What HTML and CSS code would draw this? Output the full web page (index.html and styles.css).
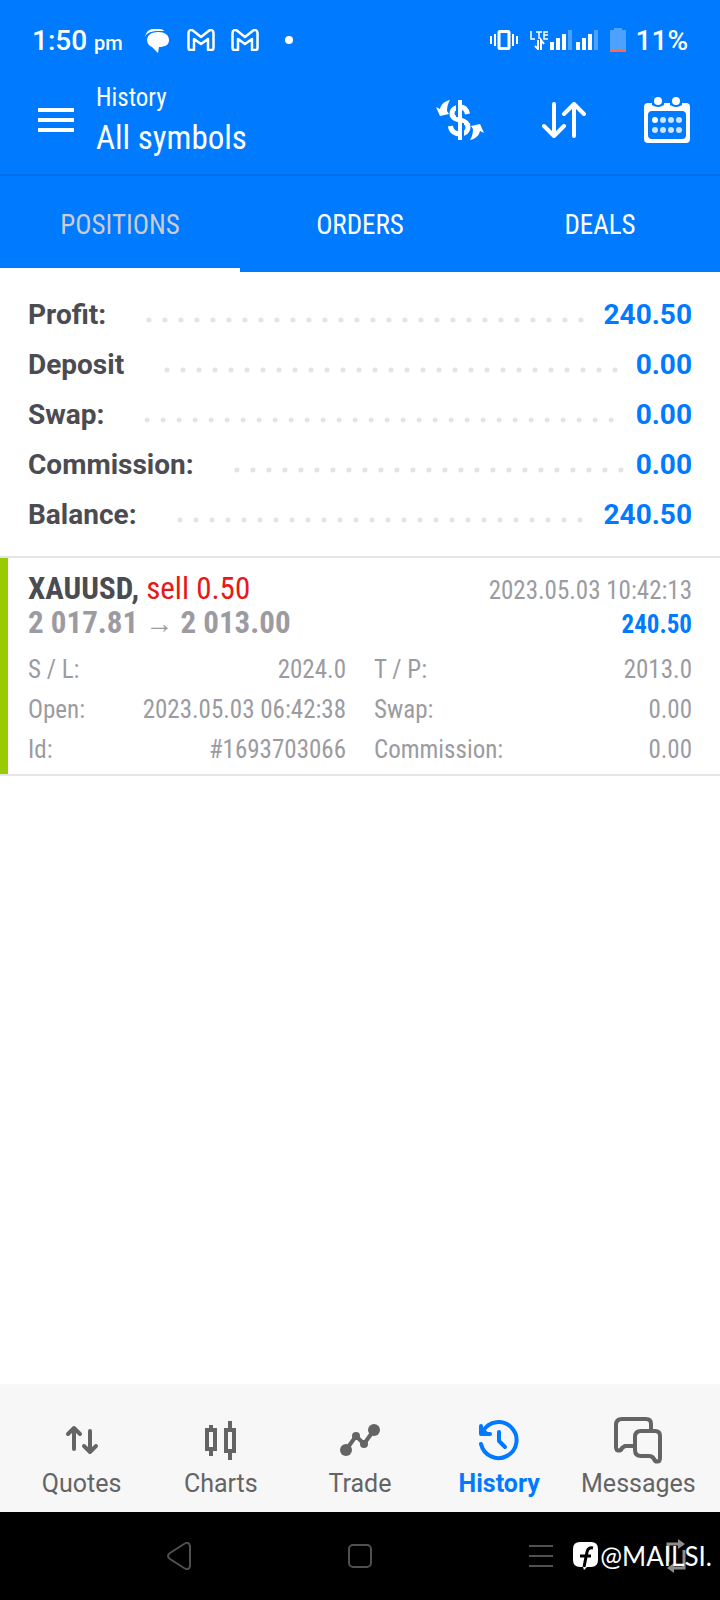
FILE: index.html
```
<!DOCTYPE html>
<html lang="en">
<head>
<meta charset="utf-8">
<meta name="viewport" content="width=device-width, initial-scale=1">
<title>History</title>
<link rel="stylesheet" href="styles.css">
</head>
<body>
<div class="screen">
  <header class="top">
    <div class="status">
      <div class="status-side">
        <span class="clock">1:50 <small class="meridiem">pm</small></span>
        <svg class="s-chat" width="24" height="24" viewBox="0 0 24 24" aria-hidden="true"><path d="M0 8C1 3 4 0 8 0h6c3 0 5 1 6 3H8C4 3 1 5 0 8z" fill="#fff"/><path d="M13 3c7 0 11 3 11 8s-4 7-10 7l-1 6-6-6c-3-1-5-4-5-7 0-5 4-8 11-8z" fill="#fff"/><path d="M1.500 10C3 4 7 2.500 12 2.500h8" fill="none" stroke="#007aff"/></svg>
        <svg class="s-mail" width="28" height="22" viewBox="0 0 28 22" fill="none" stroke="#fff" stroke-width="2.500" stroke-linejoin="round" aria-hidden="true"><path d="M1.500 4c0-3 3-4 5-2l7.500 6 7.500-6c2-2 5-1 5 2v15q0 2-2 2h-3.500V10l-7 5-7-5v11H3.500q-2 0-2-2z"/></svg>
        <svg class="s-mail" width="28" height="22" viewBox="0 0 28 22" fill="none" stroke="#fff" stroke-width="2.500" stroke-linejoin="round" aria-hidden="true"><path d="M1.500 4c0-3 3-4 5-2l7.500 6 7.500-6c2-2 5-1 5 2v15q0 2-2 2h-3.500V10l-7 5-7-5v11H3.500q-2 0-2-2z"/></svg>
        <span class="more-dot"></span>
      </div>
      <div class="status-side">
        <svg width="28" height="20" viewBox="0 0 28 20" fill="none" stroke="#fff" aria-hidden="true"><rect x="9" y="1.500" width="10" height="17" rx="1" stroke-width="3"/><path d="M5 4v12M23 4v12M1 6v8M27 6v8" stroke-width="2"/></svg>
        <svg class="s-signal" width="68" height="20" viewBox="0 0 68 20" aria-hidden="true"><path d="M1 1v8h4M6 2h6M9 2v7M18 2h-4v7h4M14 5h4" fill="none" stroke="#fff" stroke-width="1.500"/><path d="M8 10v9l-3-3M11 20V10l3 4" fill="none" stroke="#fff" stroke-width="2"/><path d="M20 12h4v8h-4zM26 8h4v12h-4zM32 4h4v16h-4zM46 12h4v8h-4zM52 8h4v12h-4zM58 4h4v16h-4z" fill="#fff"/><path d="M38 0h4v20h-4zM64 0h4v20h-4z" fill="#4da2ff"/></svg>
        <svg class="s-battery" width="16" height="24" viewBox="0 0 16 24" aria-hidden="true"><path d="M0 2h4V0h8v2h4v20H0z" fill="#4da2ff"/><path d="M0 22h16v2H0z" fill="#ff6b3d"/></svg>
        <span class="percent">11%</span>
      </div>
    </div>
    <div class="appbar">
      <button class="icon-btn" aria-label="Menu"><svg width="36" height="24" viewBox="0 0 36 24" aria-hidden="true"><path d="M0 0h36v4H0zM0 10h36v4H0zM0 20h36v4H0z" fill="#fff"/></svg></button>
      <div class="titles">
        <h1 class="title">History</h1>
        <p class="subtitle">All symbols</p>
      </div>
      <div class="actions">
        <button class="icon-btn" aria-label="Currency"><svg width="48" height="40" viewBox="0 0 48 40" aria-hidden="true"><path d="M31.500 14c-1-5-4-7-7.500-7s-8 2-8 6.500 4 5.500 8 6.500 8 2.500 8 7-4 7-8 7-9-2-9.500-8" fill="none" stroke="#fff" stroke-width="5"/><path d="M21 0v17M27 23v17" stroke="#007aff" stroke-width="2"/><path d="M24 0v40" stroke="#fff" stroke-width="4"/><path d="M14 0C9 1 5 4 4 9L0 7l4 9 9-2-2-3c0-4 1-8 3-11zM34 40c5-1 9-4 10-9l4 2-4-9-9 2 2 3c0 4-1 8-3 11z" fill="#fff"/></svg></button>
        <button class="icon-btn" aria-label="Sort"><svg width="44" height="36" viewBox="0 0 44 36" fill="none" stroke="#fff" stroke-width="4" stroke-linecap="round" stroke-linejoin="round" aria-hidden="true"><path d="M12 2v32M2 24l10 10 10-10M32 34V2M22 12L32 2l10 10"/></svg></button>
        <button class="icon-btn" aria-label="Calendar"><svg width="46" height="46" viewBox="0 0 46 46" aria-hidden="true"><rect y="6" width="46" height="40" rx="4" fill="#fff"/><path d="M8 6h12v2q-6 4-12 0zM26 6h12v2q-6 4-12 0z" fill="#007aff"/><circle cx="14" cy="4" r="4" fill="#fff"/><circle cx="32" cy="4" r="4" fill="#fff"/><rect x="4" y="14" width="38" height="28" rx="4" fill="#007aff"/><g fill="#cce4ff"><circle cx="11" cy="23" r="3" fill="#fff"/><circle cx="19" cy="23" r="3"/><circle cx="27" cy="23" r="3"/><circle cx="35" cy="23" r="3"/><circle cx="11" cy="33" r="3"/><circle cx="19" cy="33" r="3"/><circle cx="27" cy="33" r="3"/><circle cx="35" cy="33" r="3"/></g></svg></button>
      </div>
    </div>
    <div class="tabs" role="tablist">
      <button class="tab tab-active" role="tab" aria-selected="true">POSITIONS</button>
      <button class="tab" role="tab" aria-selected="false">ORDERS</button>
      <button class="tab" role="tab" aria-selected="false">DEALS</button>
    </div>
  </header>

  <main class="content">
    <dl class="summary">
      <div class="sum-row"><dt>Profit:</dt><dd><svg class="leader" aria-hidden="true"><line x1="3" y1="3" x2="100%" y2="3"/></svg>240.50</dd></div>
      <div class="sum-row"><dt>Deposit</dt><dd><svg class="leader" aria-hidden="true"><line x1="3" y1="3" x2="100%" y2="3"/></svg>0.00</dd></div>
      <div class="sum-row"><dt>Swap:</dt><dd><svg class="leader" aria-hidden="true"><line x1="3" y1="3" x2="100%" y2="3"/></svg>0.00</dd></div>
      <div class="sum-row"><dt>Commission:</dt><dd><svg class="leader" aria-hidden="true"><line x1="3" y1="3" x2="100%" y2="3"/></svg>0.00</dd></div>
      <div class="sum-row"><dt>Balance:</dt><dd><svg class="leader" aria-hidden="true"><line x1="3" y1="3" x2="100%" y2="3"/></svg>240.50</dd></div>
    </dl>
    <article class="trade">
      <div class="trade-line"><h2 class="symbol">XAUUSD, <span class="side">sell 0.50</span></h2><time class="when">2023.05.03 10:42:13</time></div>
      <div class="trade-line"><span class="prices">2 017.81 <span class="arrow">→</span> 2 013.00</span><span class="gain">240.50</span></div>
      <dl class="details">
        <div class="detail"><dt>S / L:</dt><dd>2024.0</dd></div>
        <div class="detail"><dt>T / P:</dt><dd>2013.0</dd></div>
        <div class="detail"><dt>Open:</dt><dd>2023.05.03 06:42:38</dd></div>
        <div class="detail"><dt>Swap:</dt><dd>0.00</dd></div>
        <div class="detail"><dt>Id:</dt><dd>#1693703066</dd></div>
        <div class="detail"><dt>Commission:</dt><dd>0.00</dd></div>
      </dl>
    </article>
  </main>

  <nav class="bottom">
    <button class="nav-item"><svg width="48" height="48" viewBox="0 0 48 48" fill="none" stroke="currentColor" stroke-width="4" stroke-linecap="round" stroke-linejoin="round" aria-hidden="true"><path d="M16 33V12M10 18l6-6 6 6M32 15v21M26 30l6 6 6-6"/></svg>Quotes</button>
    <button class="nav-item"><svg width="48" height="48" viewBox="0 0 48 48" fill="none" stroke="currentColor" stroke-width="4" aria-hidden="true"><path d="M10 14h8v19h-8zM14 9v4M14 34v6M29 14h8v21h-8zM33 5v8M33 36v8"/></svg>Charts</button>
    <button class="nav-item"><svg width="48" height="48" viewBox="0 0 48 48" aria-hidden="true"><path d="M10 34l10-14 8 8 10-14" fill="none" stroke="currentColor" stroke-width="4"/><g fill="currentColor"><circle cx="10" cy="34" r="6"/><circle cx="20" cy="20" r="4"/><circle cx="28" cy="28" r="4"/><circle cx="38" cy="14" r="6"/></g></svg>Trade</button>
    <button class="nav-item nav-active" aria-current="page"><svg width="48" height="48" viewBox="0 0 48 48" fill="none" stroke="currentColor" stroke-width="4" stroke-linecap="round" stroke-linejoin="round" aria-hidden="true"><path d="M6 28a18 18 0 1 0 2-13M6 10v8h9"/><path d="M6 10v8h9z" fill="currentColor" stroke="none"/><path d="M24 16v9l6 6"/></svg>History</button>
    <button class="nav-item"><svg width="48" height="48" viewBox="0 0 48 48" fill="none" stroke="currentColor" stroke-width="4" stroke-linejoin="round" aria-hidden="true"><path d="M37 14V8q0-5-5-5H8Q2 3 2 9v22c0 5 5 4 6 1l3-2h10M27 15h14q5 0 5 5v22c0 5-5 4-6 1-1-2-3-3-5-3h-8q-6 0-6-6V21q0-6 6-6z"/></svg>Messages</button>
  </nav>

  <footer class="system">
    <button class="sys-btn" aria-label="Back"><svg width="24" height="28" viewBox="0 0 24 28" fill="none" stroke="#505050" stroke-width="2" aria-hidden="true"><path d="M3 11L17 2q5-3 6 2v20q-1 5-6 2L3 17q-4-3 0-6z"/></svg></button>
    <button class="sys-btn" aria-label="Home"><svg width="24" height="24" viewBox="0 0 24 24" fill="none" stroke="#505050" stroke-width="2" aria-hidden="true"><rect x="1" y="1" width="22" height="22" rx="4"/></svg></button>
    <button class="sys-btn" aria-label="Recent apps"><svg width="24" height="22" viewBox="0 0 24 22" stroke="#505050" stroke-width="2" aria-hidden="true"><path d="M0 1h24M0 11h24M0 21h24"/></svg></button>
    <button class="sys-btn" aria-label="Rotate screen"><svg width="20" height="34" viewBox="0 0 20 34" fill="none" stroke="#8c8c8c" stroke-width="3" aria-hidden="true"><path d="M2 23V5h12M18 11v18H6"/><path d="M12 0l7 5-7 5zM8 24l-7 5 7 5z" fill="#8c8c8c" stroke="none"/></svg></button>
    <p class="mark"><svg width="25" height="28" viewBox="0 0 25 28" aria-hidden="true"><path d="M7 0h11q7 0 7 7v11q0 7-7 7h-4l-3 3-1-3H7q-7 0-7-7V7q0-7 7-7z" fill="#fff"/><path d="M11 25l3-15q1-5 6-4M7 14h11" fill="none" stroke="#000" stroke-width="3"/></svg>@MAILSI.</p>
  </footer>
</div>
</body>
</html>
```
FILE: styles.css
```
* { box-sizing: border-box; }
body, h1, h2, p, dl, dd { margin: 0; }
body {
  background: #fff;
  color: #4b4b52;
  font-family: Roboto, "Liberation Sans", sans-serif;
}
button {
  border: 0;
  padding: 0;
  background: none;
  color: inherit;
  font: inherit;
}
svg { display: block; flex: none; }
.screen { display: flex; flex-direction: column; min-height: 100vh; }

.top { background: #007aff; color: #fff; }
.status {
  display: flex;
  justify-content: space-between;
  height: 80px;
  padding: 0 32px;
}
.status-side { display: flex; align-items: center; }
.clock, .percent { font-size: 28px; font-weight: 500; }
.meridiem { font-size: 20px; }
.s-chat { margin: 2px 2px 0 22px; }
.s-mail { margin-left: 16px; }
.more-dot { width: 8px; height: 8px; margin-left: 26px; border-radius: 50%; background: #fff; }
.s-signal { margin-left: 12px; }
.s-battery { margin: 0 10px 0 12px; }

.appbar {
  display: flex;
  align-items: center;
  gap: 22px;
  padding: 0 30px 14px 38px;
  height: 94px;
}
.titles, .tab, .trade { font-family: "Roboto Condensed", Roboto, "Liberation Sans", sans-serif; }
.title { font-size: 25px; line-height: 36px; font-weight: 400; }
.subtitle { font-size: 33px; line-height: 44px; }
.actions { display: flex; align-items: center; gap: 58px; margin-left: auto; }

.tabs { display: grid; grid-template-columns: repeat(3, 1fr); border-top: 2px solid #006ee6; }
.tab { height: 96px; padding-top: 6px; font-size: 27px; border-bottom: 4px solid transparent; }
.tab-active { color: #ccc; border-bottom-color: #fff; }

.content { flex: 1; }
.summary { padding: 18px 28px 16px; font-size: 28px; font-weight: 700; border-bottom: 2px solid #e5e5e5; }
.sum-row { display: flex; line-height: 50px; height: 50px; gap: 40px; }
.sum-row dd { flex: 1; display: flex; align-items: center; color: #007aff; }
.leader { flex: 1; min-width: 0; height: 6px; margin: 10px 14px 0 0; overflow: visible; }
.leader line { stroke: #e4e4e6; stroke-width: 5; stroke-linecap: round; stroke-dasharray: 0 16; }

.trade {
  padding: 14px 28px 4px;
  box-shadow: inset 8px 0 #99cc00;
  border-bottom: 2px solid #e5e5e5;
  color: #9b9ba1;
  font-size: 25px;
}
.trade-line { display: flex; justify-content: space-between; align-items: baseline; height: 34px; line-height: 34px; }
.symbol, .prices { font-size: 31px; font-weight: 700; }
.symbol { color: #4b4b52; }
.side { color: #e81818; font-weight: 400; }
.arrow { font-family: "Noto Sans", sans-serif; font-size: 28px; line-height: 1; }
.gain { color: #007aff; font-weight: 700; }
.details { display: grid; grid-template-columns: 1fr 1fr; column-gap: 28px; margin-top: 10px; line-height: 40px; }
.detail { display: flex; justify-content: space-between; }

.bottom {
  display: grid;
  grid-template-columns: repeat(5, 1fr);
  padding: 0 12px;
  height: 128px;
  background: #f7f7f7;
  border-top: 1px solid #f9f9f9;
  color: #646464;
}
.nav-item { display: flex; flex-direction: column; align-items: center; padding-top: 31px; font-size: 25px; line-height: 40px; }
.nav-active { color: #007aff; font-weight: 700; }

.system {
  position: relative;
  display: grid;
  grid-template-columns: repeat(3, 1fr) 88px;
  align-items: center;
  height: 88px;
  padding-left: 88px;
  background: #000;
  color: #fff;
}
.sys-btn { display: flex; justify-content: center; }
.mark {
  position: absolute;
  right: 8px;
  top: 28px;
  display: flex;
  align-items: center;
  gap: 2px;
  font-family: Lato, sans-serif;
  font-size: 26px;
  line-height: 32px;
}
```
